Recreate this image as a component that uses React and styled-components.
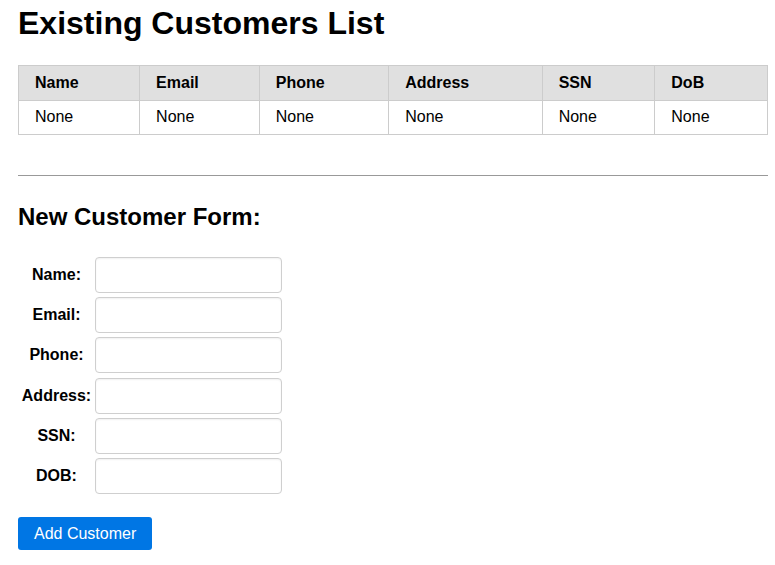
import React from 'react';
import styled, { createGlobalStyle } from 'styled-components';

const GlobalStyle = createGlobalStyle`
  body {
    margin: 0;
    background: #fff;
    font-family: 'Liberation Sans', Arial, sans-serif;
    color: #000;
  }
`;

const Page = styled.div`
  padding: 0 7px 20px 18px;
`;

const Title = styled.h1`
  margin: 0;
  padding-top: 5px;
  font-size: 32px;
  line-height: 37px;
  font-weight: bold;
`;

const Table = styled.table`
  width: 100%;
  margin-top: 23px;
  border-collapse: collapse;
  font-size: 16px;
`;

const Th = styled.th`
  background: #e0e0e0;
  border: 1px solid #ccc;
  padding: 8px 16px;
  text-align: left;
  font-weight: bold;
`;

const Td = styled.td`
  border: 1px solid #ccc;
  padding: 7px 16px 8px;
  text-align: left;
`;

const Rule = styled.hr`
  margin: 40px 0 0;
  border: none;
  border-top: 1px solid #999;
`;

const SubTitle = styled.h2`
  margin: 0;
  padding-top: 27px;
  font-size: 24px;
  line-height: 28px;
  font-weight: bold;
`;

const Form = styled.form`
  margin-top: 26px;
  display: grid;
  grid-template-columns: 73px 187px;
  column-gap: 2px;
  row-gap: 4.2px;
  padding-left: 2px;
  align-items: center;
`;

const Label = styled.label`
  font-size: 16px;
  font-weight: bold;
  text-align: center;
  white-space: nowrap;
`;

const Input = styled.input`
  box-sizing: border-box;
  width: 187px;
  height: 36px;
  border: 1px solid #cfcfcf;
  border-radius: 4px;
  box-shadow: inset 0 1px 2px rgba(0, 0, 0, 0.06);
  font-size: 16px;
  padding: 4px 8px;
  font-family: inherit;
`;

const Button = styled.button`
  margin-top: 23px;
  background: #0076e4;
  color: #fff;
  border: none;
  border-radius: 3px;
  font-family: 'Liberation Sans', Arial, sans-serif;
  font-size: 16px;
  line-height: 19px;
  padding: 7px 16px;
  cursor: pointer;
`;

const columns = ['Name', 'Email', 'Phone', 'Address', 'SSN', 'DoB'];
const fields = ['Name', 'Email', 'Phone', 'Address', 'SSN', 'DOB'];

export default function App() {
  return (
    <>
      <GlobalStyle />
      <Page>
        <Title>Existing Customers List</Title>
        <Table>
          <thead>
            <tr>
              {columns.map(c => <Th key={c}>{c}</Th>)}
            </tr>
          </thead>
          <tbody>
            <tr>
              {columns.map(c => <Td key={c}>None</Td>)}
            </tr>
          </tbody>
        </Table>
        <Rule />
        <SubTitle>New Customer Form:</SubTitle>
        <Form onSubmit={e => e.preventDefault()}>
          {fields.map(f => (
            <React.Fragment key={f}>
              <Label htmlFor={f}>{f}:</Label>
              <Input id={f} type="text" />
            </React.Fragment>
          ))}
        </Form>
        <Button type="button">Add Customer</Button>
      </Page>
    </>
  );
}
